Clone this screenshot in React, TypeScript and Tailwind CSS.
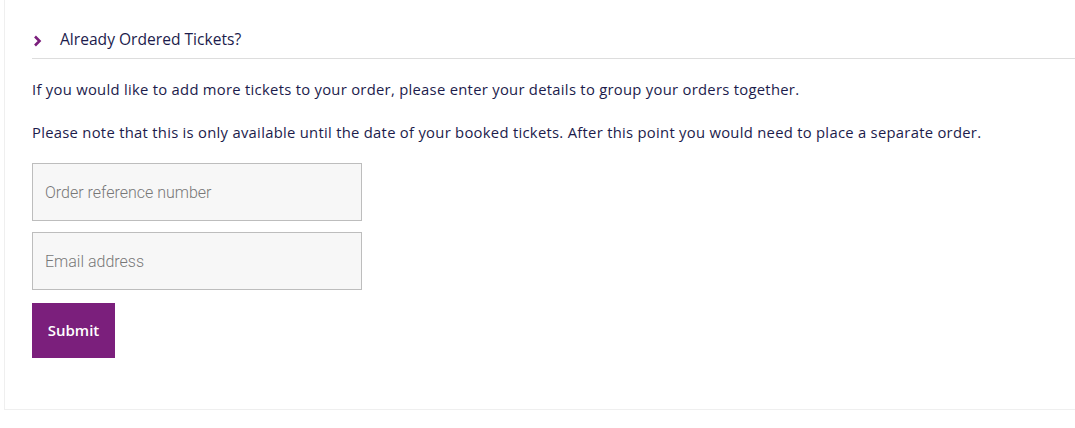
export default function App() {
  return (
    <div className="h-[428px] w-[1075px] bg-white overflow-hidden">
      <div className="ml-[4px] h-[410px] border-l border-b border-[#efefef] pl-[27px] font-['Open_Sans',sans-serif] text-[#1c1c4c]">
        <div className="flex h-[59px] items-end border-b border-[#dddddd] pb-[9px]">
          <svg width="9" height="12" viewBox="0 0 9 12" className="mb-[2px] ml-[1px]">
            <path d="M2 1.5 L6.5 6 L2 10.5" fill="none" stroke="#7b1f7c" strokeWidth="2.6" />
          </svg>
          <span className="ml-[18px] text-[15.6px] leading-[20px]">Already Ordered Tickets?</span>
        </div>
        <p className="mt-[20px] text-[14.8px] leading-[20px] tracking-[0.28px]">
          If you would like to add more tickets to your order, please enter your details to group your orders together.
        </p>
        <p className="mt-[23px] text-[14.8px] leading-[20px] tracking-[0.28px]">
          Please note that this is only available until the date of your booked tickets. After this point you would need to place a separate order.
        </p>
        <div className="mt-[21px] flex flex-col gap-[11px]">
          <input
            placeholder="Order reference number"
            className="h-[58px] w-[330px] border border-[#bdbdbd] bg-[#f7f7f7] px-[12px] font-['Roboto',sans-serif] text-[16px] font-light text-[#333] outline-none placeholder:text-[#777]"
          />
          <input
            placeholder="Email address"
            className="h-[58px] w-[330px] border border-[#bdbdbd] bg-[#f7f7f7] px-[12px] font-['Roboto',sans-serif] text-[16px] font-light text-[#333] outline-none placeholder:text-[#777]"
          />
        </div>
        <button className="mt-[13px] h-[55px] w-[83px] bg-[#7b1f7c] text-[15px] font-semibold text-white">
          Submit
        </button>
      </div>
    </div>
  );
}
